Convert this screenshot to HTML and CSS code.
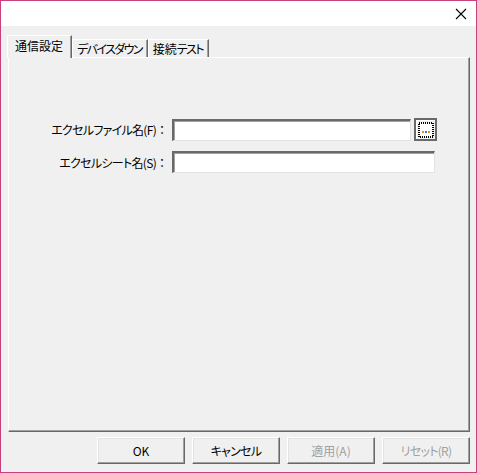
FILE: index.html
```html
<!DOCTYPE html>
<html lang="ja">
<head>
    <title>設定</title>
    <link rel="stylesheet" href="styles.css">
</head>
<body>
    <div class="window">
        <div class="titlebar">
            <svg class="close" width="12" height="12" viewBox="0 0 12 12">
                <path d="M1 1 L11 11 M11 1 L1 11" stroke="#000" stroke-width="1.1" fill="none"/>
            </svg>
        </div>
        <div class="content">
            <div class="tabs">
                <div class="tab active">通信設定</div>
                <div class="tab"><span class="kana">デバイスダウン</span></div>
                <div class="tab">接続<span class="kana">テスト</span></div>
            </div>
            <div class="panel">
                <div class="form">
                    <label class="label" for="excelFile"><span class="narrow">エクセルファイル名(F)</span><span class="colon">：</span></label>
                    <div class="field-row">
                        <input type="text" id="excelFile" class="field short">
                        <button class="browse" type="button">
                            <svg width="16" height="16" viewBox="0 0 16 16">
                                <rect x="1" y="1" width="14" height="14" fill="#fff" stroke="#000" stroke-width="2" stroke-dasharray="1 1"/>
                                <rect x="4" y="9" width="2" height="2" fill="#f08c1e"/>
                                <rect x="7" y="9" width="2" height="2" fill="#2e7fd0"/>
                                <rect x="10" y="9" width="2" height="2" fill="#f08c1e"/>
                            </svg>
                        </button>
                    </div>
                    <label class="label" for="excelSheet"><span class="narrow">エクセルシート名(S)</span><span class="colon">：</span></label>
                    <div class="field-row">
                        <input type="text" id="excelSheet" class="field long">
                    </div>
                </div>
            </div>
            <div class="buttons">
                <button class="btn" type="button">OK</button>
                <button class="btn" type="button"><span class="narrow">キャンセル</span></button>
                <button class="btn" type="button" disabled>適用(A)</button>
                <button class="btn" type="button" disabled><span class="narrow">リセット(R)</span></button>
            </div>
        </div>
    </div>
</body>
</html>
```

FILE: styles.css
```css
body {
    margin: 0;
    font-family: "Noto Sans CJK JP", "Noto Sans", sans-serif;
    font-size: 12px;
    color: #000;
    background: #fff;
}

.window {
    width: 477px;
    height: 473px;
    box-sizing: border-box;
    border: 1px solid #c9407e;
    display: flex;
    flex-direction: column;
}

.titlebar {
    height: 25px;
    background: #fff;
    display: flex;
    justify-content: flex-end;
    align-items: center;
    padding-right: 9px;
}

.content {
    flex: 1;
    background: #f0f0f0;
    padding: 9px 0 0 7px;
}

/* meiryo ui style narrow kana */
.kana {
    font-feature-settings: "palt";
    letter-spacing: -1.6px;
}

.narrow {
    font-feature-settings: "palt";
    letter-spacing: -0.7px;
}

.colon {
    display: inline-block;
    width: 12px;
    text-align: right;
}

.tabs {
    display: flex;
    align-items: flex-end;
    height: 22px;
    margin-left: 1px;
}

.tab {
    height: 18px;
    line-height: 17px;
    padding: 0 5px 0 4px;
    box-sizing: border-box;
    border-top: 1px solid #fff;
    border-left: 1px solid #fff;
    border-right: 1px solid #696969;
    box-shadow: inset -1px 0 0 #a0a0a0;
    background: #f0f0f0;
    white-space: nowrap;
}

.tab.active {
    height: 23px;
    line-height: 20px;
    padding: 0 8px 0 7px;
    margin-left: -2px;
    margin-bottom: -1px;
    position: relative;
    z-index: 1;
}

.panel {
    width: 462px;
    height: 375px;
    box-sizing: border-box;
    border-top: 1px solid #fff;
    border-left: 1px solid #fff;
    border-right: 1px solid #696969;
    border-bottom: 1px solid #696969;
    box-shadow: inset -1px -1px 0 #a0a0a0;
    padding-top: 60px;
}

.form {
    display: grid;
    grid-template-columns: 159px auto;
    column-gap: 4px;
    row-gap: 10px;
    align-items: center;
}

.label {
    text-align: right;
    white-space: nowrap;
}

.field-row {
    display: flex;
    align-items: center;
    gap: 3px;
}

.field {
    height: 22px;
    box-sizing: border-box;
    margin: 0;
    padding: 0 3px;
    background: #fff;
    border-top: 2px solid #696969;
    border-left: 2px solid #696969;
    border-right: 1px solid #e3e3e3;
    border-bottom: 1px solid #e3e3e3;
    box-shadow: inset 1px 1px 0 #a0a0a0;
    font: inherit;
}

.field.short {
    width: 239px;
}

.field.long {
    width: 263px;
}

.browse {
    width: 23px;
    height: 23px;
    box-sizing: border-box;
    padding: 0;
    margin: 0;
    background: #f0f0f0;
    border: 2px solid #696969;
    box-shadow: inset 1px 1px 0 #fff;
    display: flex;
    align-items: center;
    justify-content: center;
}

.buttons {
    display: flex;
    justify-content: flex-end;
    gap: 7px;
    padding: 5px 6px 0 0;
}

.btn {
    width: 88px;
    height: 27px;
    box-sizing: border-box;
    margin: 0;
    background: #f0f0f0;
    border-top: 1px solid #fff;
    border-left: 1px solid #fff;
    border-right: 1px solid #696969;
    border-bottom: 1px solid #696969;
    box-shadow: inset -1px -1px 0 #a0a0a0, inset 1px 1px 0 #e3e3e3;
    font: inherit;
    color: #000;
}

.btn:disabled {
    color: #a0a0a0;
}
```
